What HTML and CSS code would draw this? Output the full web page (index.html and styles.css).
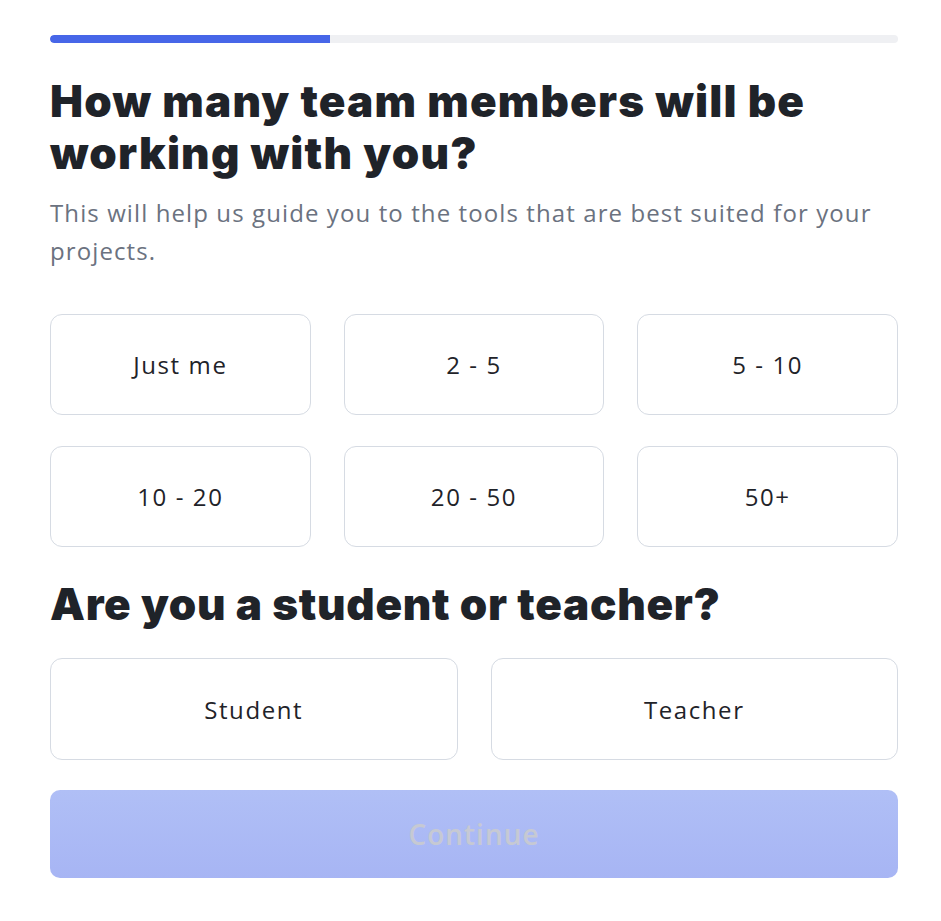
FILE: index.html
```html
<!DOCTYPE html>
<html lang="en">
<head>
<meta charset="utf-8">
<link rel="stylesheet" href="styles.css">
</head>
<body>
<main class="page">
  <div class="progress"><div class="progress-fill" style="width: 33%"></div></div>
  <h1 class="title">How many team members will be working with you?</h1>
  <p class="subtitle">This will help us guide you to the tools that are best suited for your projects.</p>
  <div class="options three">
    <button class="option">Just me</button>
    <button class="option">2 - 5</button>
    <button class="option">5 - 10</button>
    <button class="option">10 - 20</button>
    <button class="option">20 - 50</button>
    <button class="option">50+</button>
  </div>
  <h2 class="title second">Are you a student or teacher?</h2>
  <div class="options two">
    <button class="option">Student</button>
    <button class="option">Teacher</button>
  </div>
  <button class="continue" disabled>Continue</button>
</main>
</body>
</html>
```
FILE: styles.css
```css
* { box-sizing: border-box; }
html, body { margin: 0; background: #ffffff; }
.page {
  width: 848px;
  margin: 0 0 0 50px;
  padding-top: 35px;
  display: flex;
  flex-direction: column;
}
.progress {
  height: 8px;
  background: #eff0f3;
  border-radius: 4px;
  overflow: hidden;
}
.progress-fill {
  height: 100%;
  background: #4766e8;
  border-radius: 4px 0 0 4px;
}
.title {
  margin: 32px 0 0;
  font-family: Inter, "Liberation Sans", sans-serif;
  font-weight: 900;
  font-size: 44px;
  line-height: 52px;
  letter-spacing: 1.2px;
  color: #1f2329;
}
.title.second { margin-top: 31px; letter-spacing: 0.7px; }
.subtitle {
  margin: 15px 0 0;
  font-family: "Open Sans", "Noto Sans", sans-serif;
  font-size: 24px;
  line-height: 38px;
  letter-spacing: 1.1px;
  color: #6b7280;
}
.options {
  display: grid;
  column-gap: 33px;
  row-gap: 31px;
  margin-top: 44px;
}
.options.three { grid-template-columns: repeat(3, 1fr); }
.options.three .option { height: 101px; }
.options.two { grid-template-columns: repeat(2, 1fr); margin-top: 28px; }
.option {
  height: 102px;
  border: 1px solid #d6dbe3;
  border-radius: 12px;
  background: #ffffff;
  font-family: "Open Sans", "Noto Sans", sans-serif;
  font-weight: 500;
  font-size: 24px;
  letter-spacing: 1.6px;
  color: #1f2329;
  padding: 0;
}
.continue {
  margin-top: 30px;
  height: 88px;
  border: none;
  border-radius: 10px;
  background: linear-gradient(#b0bff6, #a7b5f4);
  font-family: "Open Sans", "Noto Sans", sans-serif;
  font-weight: 600;
  font-size: 28px;
  letter-spacing: 1px;
  color: #c6c9d3;
}
```
